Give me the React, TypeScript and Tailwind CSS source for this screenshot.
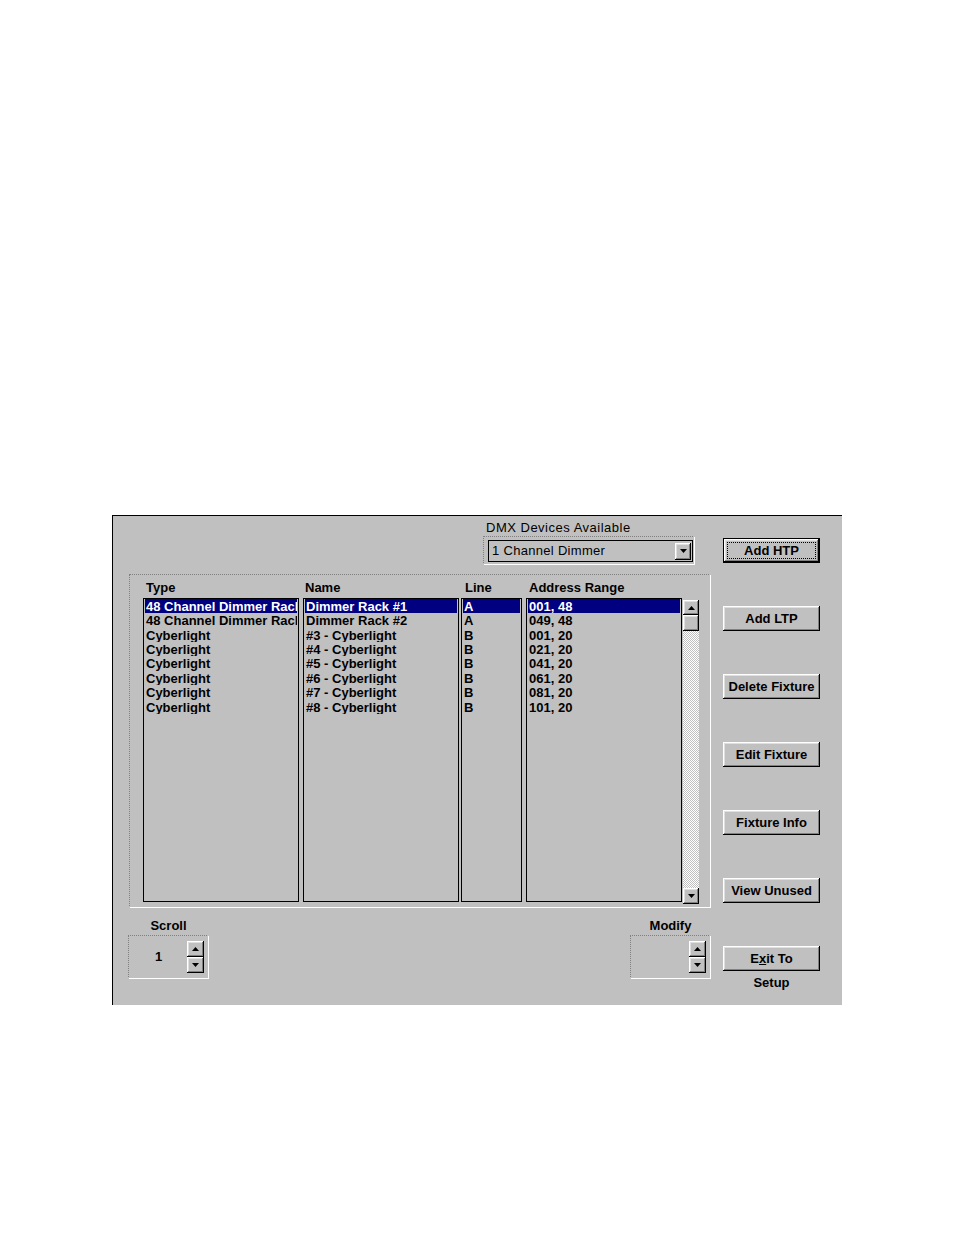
import React from 'react';

const FONT = { fontFamily: '"Liberation Sans", Arial, sans-serif' };

// raised 3d bevel used for buttons and scroll arrows
const bevel =
  'bg-[#c0c0c0] shadow-[inset_-1px_-1px_#000000,inset_1px_1px_#ffffff,inset_-2px_-2px_#808080,inset_2px_2px_#dfdfdf]';
const etched =
  'border [border-style:dotted_solid_solid_dotted] border-t-[#808080] border-l-[#808080] border-r-white border-b-white';

const types = [
  '48 Channel Dimmer Rack',
  '48 Channel Dimmer Rack',
  'Cyberlight',
  'Cyberlight',
  'Cyberlight',
  'Cyberlight',
  'Cyberlight',
  'Cyberlight',
];
const names = [
  'Dimmer Rack #1',
  'Dimmer Rack #2',
  '#3 - Cyberlight',
  '#4 - Cyberlight',
  '#5 - Cyberlight',
  '#6 - Cyberlight',
  '#7 - Cyberlight',
  '#8 - Cyberlight',
];
const lines = ['A', 'A', 'B', 'B', 'B', 'B', 'B', 'B'];
const ranges = ['001, 48', '049, 48', '001, 20', '021, 20', '041, 20', '061, 20', '081, 20', '101, 20'];

const Arrow: React.FC<{ up?: boolean }> = ({ up }) => (
  <svg width="7" height="4" viewBox="0 0 7 4" className="block">
    {up ? <polygon points="3.5,0 7,4 0,4" fill="#000" /> : <polygon points="0,0 7,0 3.5,4" fill="#000" />}
  </svg>
);

const ArrowButton: React.FC<{ up?: boolean; className?: string }> = ({ up, className = '' }) => (
  <div className={`${bevel} flex items-center justify-center ${className}`}>
    <Arrow up={up} />
  </div>
);

const Column: React.FC<{
  title: string;
  items: string[];
  width: string;
  titlePad: string;
}> = ({ title, items, width, titlePad }) => (
  <div className="flex flex-col">
    <div className={`h-4 leading-4 ${titlePad}`}>{title}</div>
    <div className={`mt-[2px] h-[304px] ${width} border border-black px-px overflow-hidden`}>
      {items.map((item, i) => (
        <div
          key={i}
          className={`h-[14.36px] leading-[15px] pl-px whitespace-nowrap overflow-hidden ${
            i === 0 ? 'bg-[#000080] text-white' : ''
          }`}
        >
          {item}
        </div>
      ))}
    </div>
  </div>
);

const ScrollBar: React.FC = () => (
  <div className="mt-[20px] ml-px h-[304px] w-[17px] flex flex-col">
    <ArrowButton up className="h-[15px] w-[16px] shrink-0" />
    <div className={`${bevel} h-[16px] w-[16px] shrink-0`} />
    <div className="flex-1 w-[16px] bg-[image:repeating-conic-gradient(#ffffff_0%_25%,#c0c0c0_0%_50%)] bg-[length:2px_2px]" />
    <ArrowButton className="h-[16px] w-[16px] shrink-0" />
  </div>
);

const SpinBox: React.FC<{ label: string; value?: string; className?: string }> = ({ label, value, className = '' }) => (
  <div className={`flex flex-col items-center w-[81px] ${className}`}>
    <div className="h-4 leading-4">{label}</div>
    <div className={`mt-px w-[81px] h-[44px] ${etched} flex items-start pt-[5px]`}>
      <div className="w-[58px] h-[32px] leading-[32px] pl-[26px]">{value}</div>
      <div className="flex flex-col">
        <ArrowButton up className="h-[16px] w-[17px]" />
        <ArrowButton className="h-[16px] w-[17px]" />
      </div>
    </div>
  </div>
);

const Win95Button: React.FC<{ children: React.ReactNode; isDefault?: boolean }> = ({ children, isDefault }) =>
  isDefault ? (
    <div className="w-[97px] h-[25px] border border-black">
      <div className={`${bevel} w-full h-full p-[3px]`}>
        <div className="w-full h-full border border-dotted border-black flex items-center justify-center leading-none">
          {children}
        </div>
      </div>
    </div>
  ) : (
    <div className={`${bevel} w-[97px] h-[25px] flex items-center justify-center leading-none`}>{children}</div>
  );

const App: React.FC = () => {
  return (
    <div className="w-[954px] h-[1235px] bg-white pt-[515px] pl-[112px] text-black" style={FONT}>
      <div className="w-[730px] h-[490px] bg-[#c0c0c0] border-l border-t border-black flex text-[13px] font-bold">
        {/* left area */}
        <div className="pl-[16px] flex flex-col">
          <div className="h-[58px] pt-[4px] pl-[354px]">
            <div className="h-4 leading-4 pl-[3px] font-normal tracking-[0.5px]">DMX Devices Available</div>
            <div className={`w-[212px] h-[29px] ${etched} pl-[4px] pt-[3px]`}>
              <div className="w-[205px] h-[22px] border border-black flex items-center justify-between pl-[3px] pr-px">
                <span className="font-normal tracking-[0.3px]">1 Channel Dimmer</span>
                <ArrowButton className="h-[17px] w-[16px]" />
              </div>
            </div>
          </div>

          <div className={`w-[582px] h-[334px] ${etched} pt-[5px] pl-[13px] flex`}>
            <Column title="Type" items={types} width="w-[156px]" titlePad="pl-[3px]" />
            <div className="w-[4px]" />
            <Column title="Name" items={names} width="w-[156px]" titlePad="pl-[2px]" />
            <div className="w-[2px]" />
            <Column title="Line" items={lines} width="w-[61px]" titlePad="pl-[4px]" />
            <div className="w-[4px]" />
            <Column title="Address Range" items={ranges} width="w-[156px]" titlePad="pl-[3px]" />
            <ScrollBar />
          </div>

          <div className="mt-[10px] flex justify-between">
            <SpinBox label="Scroll" value="1" className="-ml-px" />
            <SpinBox label="Modify" />
          </div>
        </div>

        {/* right button column */}
        <div className="ml-[12px] pt-[22px] flex flex-col gap-[43px]">
          <Win95Button isDefault>Add HTP</Win95Button>
          <Win95Button>Add LTP</Win95Button>
          <Win95Button>Delete Fixture</Win95Button>
          <Win95Button>Edit Fixture</Win95Button>
          <Win95Button>Fixture Info</Win95Button>
          <Win95Button>View Unused</Win95Button>
          <div className="flex flex-col items-center">
            <Win95Button>
              <span>
                E<span className="underline">x</span>it To
              </span>
            </Win95Button>
            <div className="mt-[4px] h-4 leading-4">Setup</div>
          </div>
        </div>
      </div>
    </div>
  );
};

export default App;
